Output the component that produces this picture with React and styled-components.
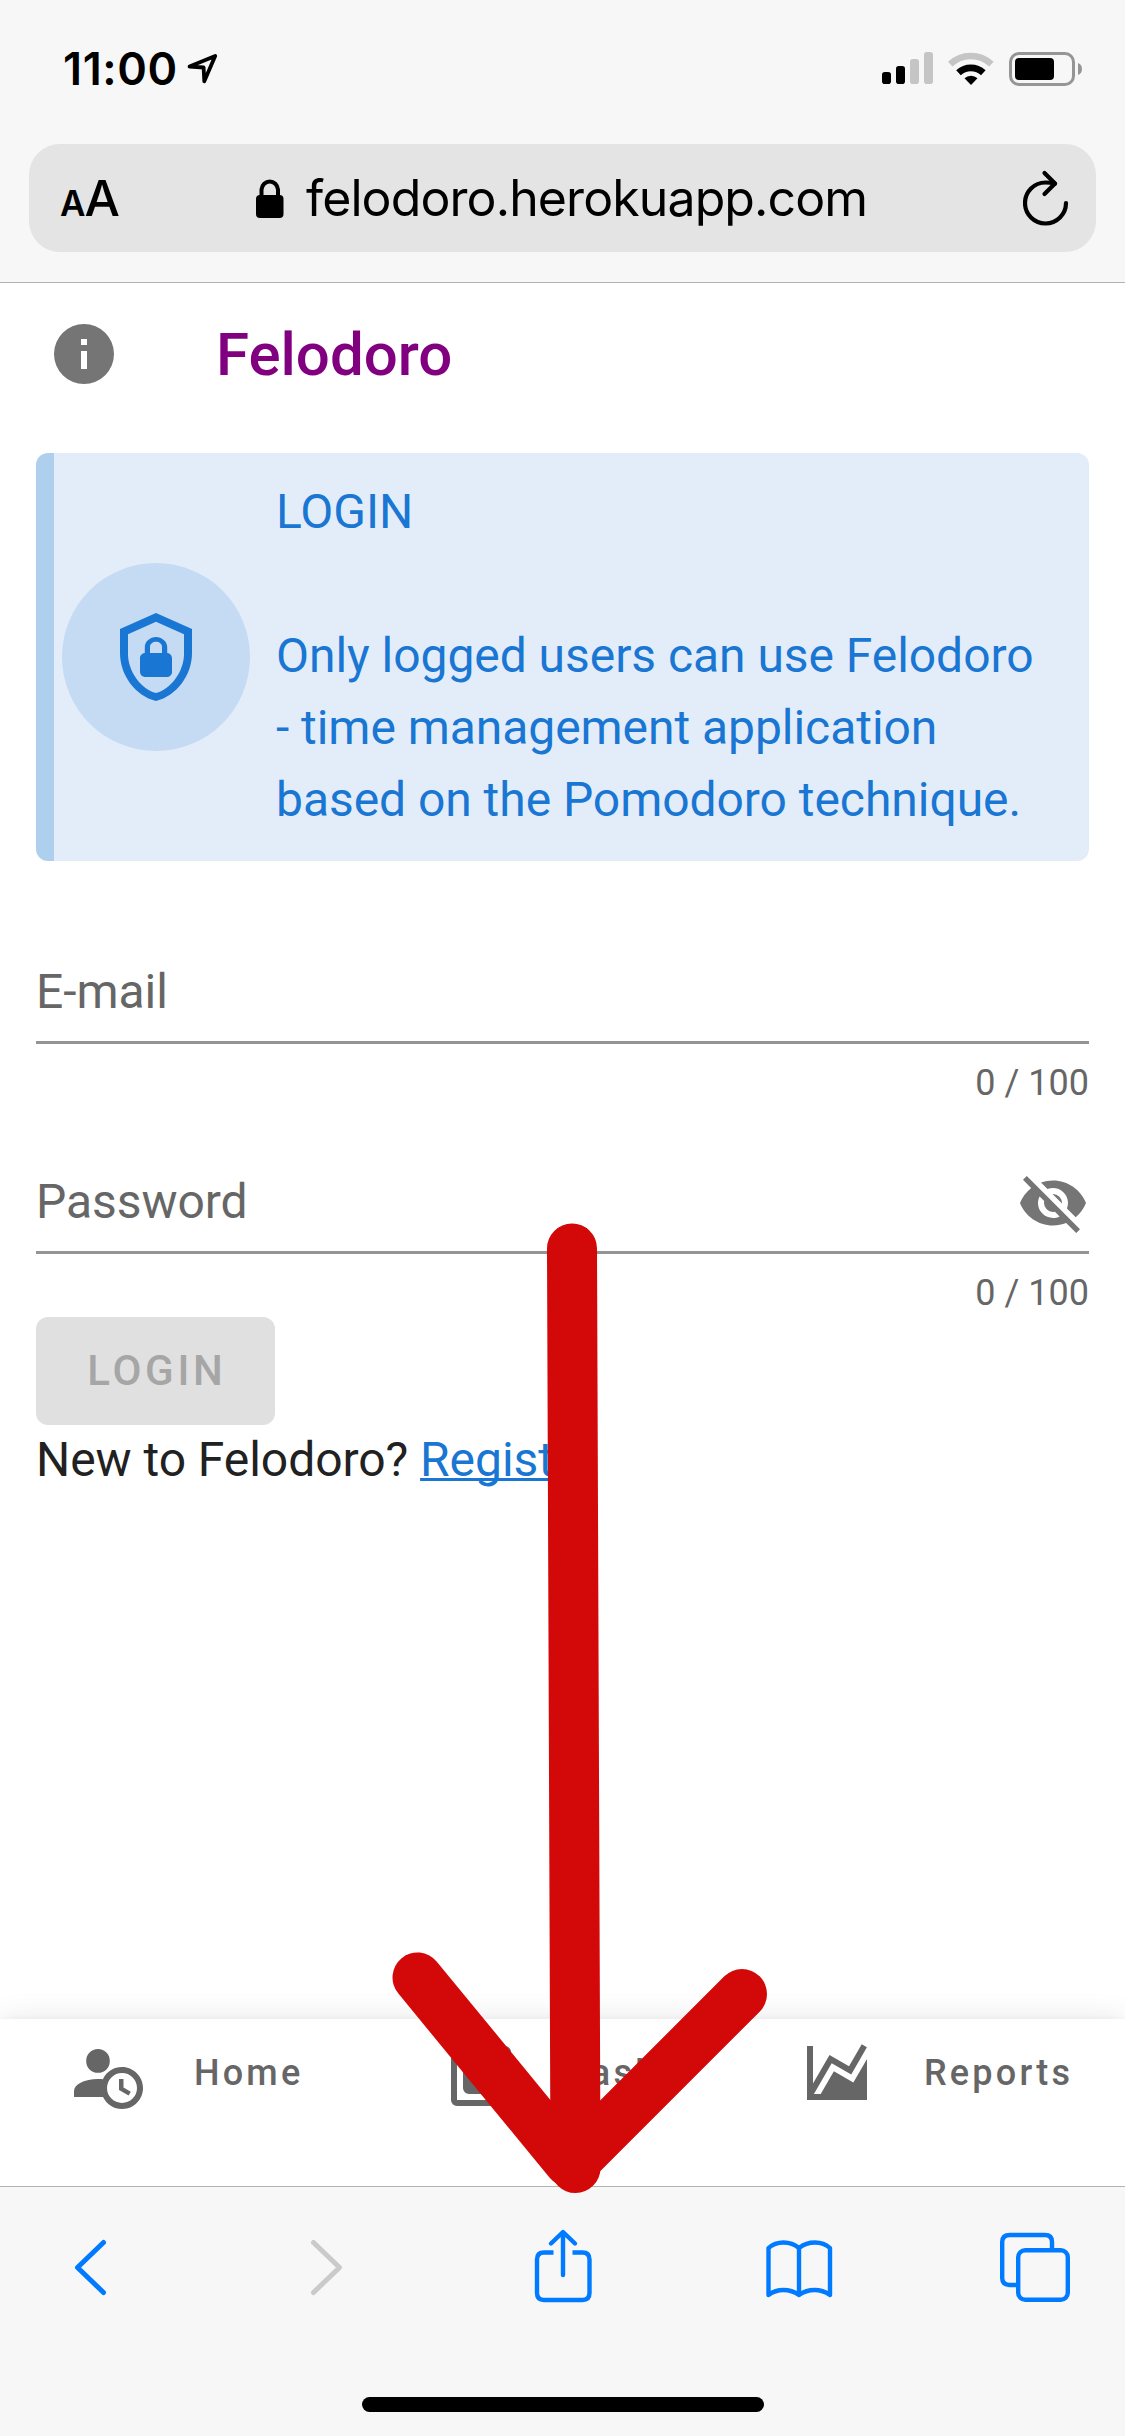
import React from "react";
import styled, { createGlobalStyle } from "styled-components";

const GlobalStyle = createGlobalStyle`
  * { box-sizing: border-box; }
  body { margin: 0; background: #fff; }
`;

const Screen = styled.div`
  position: relative;
  display: flex;
  flex-direction: column;
  width: 1125px;
  height: 2436px;
  overflow: hidden;
  background: #fff;
  font-family: Roboto, "Liberation Sans", sans-serif;
`;

/* Browser chrome, top */
const BrowserTop = styled.header`
  height: 283px;
  flex: none;
  background: #f7f7f7;
  border-bottom: 1px solid #b2b2b2;
  font-family: Inter, "Liberation Sans", sans-serif;
  color: #000;
`;
const StatusBar = styled.div`
  height: 144px;
  padding: 48px 43px 0 63px;
  display: flex;
  align-items: flex-start;
`;
const Clock = styled.span`
  width: 124px;
  font-size: 45px;
  line-height: 42px;
  font-weight: 600;
  letter-spacing: 0.6px;
  white-space: nowrap;
`;
const StatusIcons = styled.div`
  margin-left: auto;
  display: flex;
  gap: 15px;
  padding-top: 4px;
`;
const AddressBar = styled.div`
  margin: 0 29px;
  height: 108px;
  border-radius: 31px;
  background: #e4e4e4;
  display: flex;
  align-items: center;
  padding: 0 27px 0 31px;
`;
const TextSize = styled.div`
  width: 196px;
  padding-top: 4px;
  display: flex;
  align-items: baseline;
  line-height: 60px;
`;
const SizeLetter = styled.span`
  font-size: ${(p) => p.$size}px;
  font-weight: ${(p) => p.$weight};
  letter-spacing: -1px;
`;
const Address = styled.div`
  flex: 1;
  display: flex;
  align-items: center;
  gap: 22px;
`;
const Url = styled.span`
  font-size: 50px;
  line-height: 60px;
  letter-spacing: ${(p) => p.$tracking}px;
  white-space: nowrap;
`;

/* Page */
const Page = styled.main`
  flex: 1;
  display: flex;
  flex-direction: column;
  min-height: 0;
`;
const AppBar = styled.div`
  height: 142px;
  padding-left: 48px;
  display: flex;
  align-items: center;
  gap: 96px;
`;
const AppTitle = styled.h1`
  margin: 0;
  padding-top: 2px;
  font-size: 60px;
  font-weight: 500;
  line-height: 90px;
  letter-spacing: 0;
  color: #800080;
`;
const Content = styled.section`
  flex: 1;
  padding: 28px 36px 0;
`;
const Alert = styled.div`
  height: 408px;
  border-radius: 12px;
  border-left: 18px solid #aecfee;
  background: #e3edfa;
  color: #1976d2;
  display: flex;
  align-items: center;
  padding-left: 8px;
`;
const AlertIcon = styled.div`
  width: 188px;
  height: 188px;
  border-radius: 50%;
  background: #c4dbf3;
  display: flex;
  align-items: center;
  justify-content: center;
`;
const AlertText = styled.div`
  margin-left: 26px;
  padding-bottom: 3px;
  font-size: 48px;
  line-height: 72px;
  white-space: pre-line;
  letter-spacing: -0.05px;
`;
const Fields = styled.div`
  margin-top: 84px;
  display: flex;
  flex-direction: column;
  gap: 54px;
`;
const Field = styled.div``;
const FieldRow = styled.div`
  height: 99px;
  padding-bottom: 3px;
  border-bottom: 3px solid #949494;
  display: flex;
  align-items: center;
  justify-content: space-between;
  font-size: 48px;
  line-height: 60px;
  letter-spacing: -0.05px;
  color: #666;
`;
const Counter = styled.div`
  margin-top: 21px;
  text-align: right;
  font-size: 36px;
  line-height: 36px;
  color: #666;
`;
const LoginButton = styled.button`
  display: block;
  margin: 6px 0 0;
  width: 239px;
  height: 108px;
  border: 0;
  border-radius: 12px;
  background: #e0e0e0;
  color: #a6a6a6;
  font: 500 42px Roboto, sans-serif;
  letter-spacing: 3.75px;
  padding: 0 0 2px 3px;
`;
const Signup = styled.p`
  margin: 0;
  font-size: 48px;
  line-height: 70px;
  letter-spacing: -0.05px;
  color: #212121;
`;
const Link = styled.a`
  color: #1976d2;
  text-decoration: underline;
  text-decoration-thickness: 3px;
  text-decoration-skip-ink: none;
`;

const BottomNav = styled.nav`
  height: 167px;
  flex: none;
  background: #fff;
  box-shadow: 0 6px 12px -3px rgba(0, 0, 0, 0.2), 0 12px 15px rgba(0, 0, 0, 0.14),
    0 3px 30px rgba(0, 0, 0, 0.12);
  display: flex;
  padding: 18px 0 0 71px;
`;
const NavItem = styled.div`
  width: ${(p) => p.$width}px;
  display: flex;
  gap: 51px;
  color: #666;
`;
const NavLabel = styled.span`
  font-size: 36px;
  font-weight: 500;
  line-height: 72px;
  letter-spacing: 3.2px;
`;

/* Browser chrome, bottom */
const BrowserBottom = styled.footer`
  height: 250px;
  flex: none;
  background: #f7f7f7;
  border-top: 1px solid #b2b2b2;
  display: flex;
  flex-direction: column;
  align-items: center;
`;
const Tools = styled.div`
  align-self: stretch;
  height: 210px;
  padding: 39px 54px 0;
  display: flex;
  justify-content: space-between;
`;
const HomeIndicator = styled.div`
  width: 402px;
  height: 15px;
  border-radius: 8px;
  background: #000;
`;
const ArrowOverlay = styled.svg`
  position: absolute;
  left: 392px;
  top: 1223px;
  pointer-events: none;
`;

const MdiSvg = styled.svg`
  display: block;
  flex: none;
  width: ${(p) => p.$size}px;
  height: ${(p) => p.$size}px;
  margin-top: ${(p) => p.$drop || 0}px;
  fill: ${(p) => p.$color || "currentColor"};
`;
const Glyph = styled.svg`
  display: block;
  flex: none;
`;

const Mdi = ({ d, size = 72, color, drop }) => (
  <MdiSvg viewBox="0 0 24 24" $size={size} $color={color} $drop={drop}>
    <path d={d} />
  </MdiSvg>
);

const icons = {
  info: "M13,9H11V7H13M13,17H11V11H13M12,2A10,10 0 0,0 2,12A10,10 0 0,0 12,22A10,10 0 0,0 22,12A10,10 0 0,0 12,2Z",
  shield:
    "M21,11C21,16.55 17.16,21.74 12,23C6.84,21.74 3,16.55 3,11V5L12,1L21,5V11M12,21C15.75,20 19,15.54 19,11.22V6.3L12,3.18L5,6.3V11.22C5,15.54 8.25,20 12,21M14.8,11V9.5C14.8,8.1 13.4,7 12,7C10.6,7 9.2,8.1 9.2,9.5V11C8.6,11 8,11.6 8,12.2V15.7C8,16.4 8.6,17 9.2,17H14.7C15.4,17 16,16.4 16,15.8V12.3C16,11.6 15.4,11 14.8,11M13.5,11H10.5V9.5C10.5,8.7 11.2,8.2 12,8.2C12.8,8.2 13.5,8.7 13.5,9.5V11Z",
  eyeOff:
    "M11.83,9L15,12.16C15,12.11 15,12.05 15,12A3,3 0 0,0 12,9C11.94,9 11.89,9 11.83,9M7.53,9.8L9.08,11.35C9.03,11.56 9,11.77 9,12A3,3 0 0,0 12,15C12.22,15 12.44,14.97 12.65,14.92L14.2,16.47C13.53,16.8 12.79,17 12,17A5,5 0 0,1 7,12C7,11.21 7.2,10.47 7.53,9.8M2,4.27L4.28,6.55L4.73,7C3.08,8.3 1.78,10 1,12C2.73,16.39 7,19.5 12,19.5C13.55,19.5 15.03,19.2 16.38,18.66L16.81,19.08L19.73,22L21,20.73L3.27,3M12,7A5,5 0 0,1 17,12C17,12.64 16.87,13.26 16.64,13.82L19.57,16.75C21.07,15.5 22.27,13.86 23,12C21.27,7.61 17,4.5 12,4.5C10.6,4.5 9.26,4.75 8,5.2L10.17,7.35C10.74,7.13 11.35,7 12,7Z",
  accountClock:
    "M10.63,14.1C12.23,10.58 16.38,9.03 19.9,10.63C23.42,12.23 24.97,16.38 23.37,19.9C22.24,22.4 19.75,24 17,24C14.3,24 11.83,22.44 10.67,20H1V18C1.06,16.86 1.84,15.93 3.34,15.18C4.84,14.43 6.72,14.04 9,14C9.57,14 10.11,14.05 10.63,14.1V14.1M9,4C10.12,4.03 11.06,4.42 11.81,5.17C12.56,5.92 12.93,6.86 12.93,8C12.93,9.14 12.56,10.08 11.81,10.83C11.06,11.58 10.12,11.95 9,11.95C7.88,11.95 6.94,11.58 6.19,10.83C5.44,10.08 5.07,9.14 5.07,8C5.07,6.86 5.44,5.92 6.19,5.17C6.94,4.42 7.88,4.03 9,4M17,22A5,5 0 0,0 22,17A5,5 0 0,0 17,12A5,5 0 0,0 12,17A5,5 0 0,0 17,22M16,14H17.5V16.82L19.94,18.23L19.19,19.53L16,17.69V14Z",
  clipboards:
    "M4,7V21H18V23H4A2,2 0 0,1 2,21V7H4M20,3A2,2 0 0,1 22,5V17A2,2 0 0,1 20,19H8A2,2 0 0,1 6,17V5A2,2 0 0,1 8,3H11.18C11.6,1.84 12.7,1 14,1C15.3,1 16.4,1.84 16.82,3H20M14,3A1,1 0 0,0 13,4A1,1 0 0,0 14,5A1,1 0 0,0 15,4A1,1 0 0,0 14,3Z",
  chart:
    "M17.45,15.18L22,7.31V21H2V3H4V15.54L9.5,6L16,9.78L20.24,2.45L21.97,3.45L16.74,12.5L10.23,8.75L4.31,19H6.57L10.96,11.44L17.45,15.18Z",
};

const navItems = [
  { icon: icons.accountClock, label: "Home", width: 374 },
  { icon: icons.clipboards, label: "Tasks", width: 356 },
  { icon: icons.chart, label: "Reports", width: 324 },
];

const ToolIcon = ({ children, color = "#007aff" }) => (
  <Glyph width="72" height="80" viewBox="0 0 72 80" fill="none" stroke={color} strokeWidth="4.4" strokeLinecap="round" strokeLinejoin="round">
    {children}
  </Glyph>
);

export default function App() {
  return (
    <Screen>
      <GlobalStyle />
      <BrowserTop>
        <StatusBar>
          <Clock>11:00</Clock>
          <Glyph width="32" height="40" viewBox="187 48 32 40" fill="none" stroke="#000" strokeWidth="3.8" strokeLinejoin="round">
            <path d="M189.500 66.500 215.200 55.900 204.300 81.300 203.600 67.500Z" />
          </Glyph>
          <StatusIcons>
            <Glyph width="51" height="33" viewBox="882 53 51 33">
              <rect x="882" y="73" width="9" height="12" rx="2.8" />
              <rect x="896" y="67" width="9" height="18" rx="2.8" />
              <rect x="910" y="60" width="9" height="25" rx="2.8" fill="#c5c5c5" />
              <rect x="924" y="53" width="9" height="32" rx="2.8" fill="#c5c5c5" />
            </Glyph>
            <Glyph width="46" height="34" viewBox="948 52 46 34" fill="none">
              <path d="M950.2 64.2A30 30 0 0 1 991.4 64.2" stroke="#c5c5c5" strokeWidth="6.6" />
              <path d="M958.5 72.8A18.3 18.3 0 0 1 983.3 72.8" stroke="#000" strokeWidth="6.8" />
              <path d="M964.5 78.3A9.5 9.5 0 0 1 977.5 78.3L971 85Z" fill="#000" />
            </Glyph>
            <Glyph width="73" height="34" viewBox="1009 52 73 34">
              <rect x="1010.5" y="53.5" width="63" height="31" rx="8.5" fill="none" stroke="#959595" strokeWidth="3" />
              <rect x="1015" y="58" width="39" height="22" rx="4" />
              <path d="M1078 63C1083.300 64.500 1083.300 73.500 1078 75Z" fill="#959595" />
            </Glyph>
          </StatusIcons>
        </StatusBar>
        <AddressBar>
          <TextSize>
            <SizeLetter $size={35} $weight={600}>A</SizeLetter>
            <SizeLetter $size={50} $weight={500}>A</SizeLetter>
          </TextSize>
          <Address>
            <Glyph width="28" height="40" viewBox="0 0 28 40">
              <rect x="0" y="17" width="27.500" height="23" rx="4" />
              <path d="M5.500 18V11.500A8.300 9 0 0 1 22 11.500V18" fill="none" stroke="#000" strokeWidth="4" />
            </Glyph>
            <Url $tracking={-0.9}>felodoro.herokuapp.com</Url>
          </Address>
          <Glyph width="46" height="56" viewBox="1023 170 46 56" fill="none" stroke="#000" strokeWidth="4.2" strokeLinecap="round" strokeLinejoin="round">
            <path d="M1066 203A20.500 20.500 0 1 1 1045.500 182.500Q1050 182.500 1055 183.600" />
            <path d="M1044.500 173 1055 183.600 1044.500 194" />
          </Glyph>
        </AddressBar>
      </BrowserTop>

      <Page>
        <AppBar>
          <Mdi d={icons.info} color="#757575" />
          <AppTitle>Felodoro</AppTitle>
        </AppBar>
        <Content>
          <Alert>
            <AlertIcon>
              <Mdi d={icons.shield} size={96} />
            </AlertIcon>
            <AlertText>{"LOGIN\n\nOnly logged users can use Felodoro\n- time management application\nbased on the Pomodoro technique."}</AlertText>
          </Alert>
          <Fields>
            <Field>
              <FieldRow>E-mail</FieldRow>
              <Counter>0 / 100</Counter>
            </Field>
            <Field>
              <FieldRow>
                Password
                <Mdi d={icons.eyeOff} color="#757575" drop={3} />
              </FieldRow>
              <Counter>0 / 100</Counter>
            </Field>
          </Fields>
          <LoginButton>LOGIN</LoginButton>
          <Signup>
            New to Felodoro? <Link>Register</Link>
          </Signup>
        </Content>
      </Page>

      <BottomNav>
        {navItems.map((item) => (
          <NavItem key={item.label} $width={item.width}>
            <Mdi d={item.icon} />
            <NavLabel>{item.label}</NavLabel>
          </NavItem>
        ))}
      </BottomNav>

      <BrowserBottom>
        <Tools>
          <ToolIcon>
            <path d="M49.500 16.500 23.500 41.500 49.500 66.500" strokeWidth="5" />
          </ToolIcon>
          <ToolIcon color="#cacaca">
            <path d="M23.500 16.500 49.500 41.500 23.500 66.500" strokeWidth="5" />
          </ToolIcon>
          <ToolIcon>
            <path d="M26.500 26.500H17Q10 26.500 10 33.500V67Q10 74 17 74H55.500Q62.500 74 62.500 67V33.500Q62.500 26.500 55.500 26.500H45.500" strokeLinecap="butt" />
            <path d="M36 7V49M24 17.500 36 6 48 17.500" />
          </ToolIcon>
          <ToolIcon>
            <path d="M36 22Q29.500 16.500 20.500 16.500T5.500 22V69Q12 64 20.500 64T36 69Q43 64 51.500 64T67 69V22Q61 16.500 52 16.500T36 22V69" />
          </ToolIcon>
          <ToolIcon>
            <path d="M17 59H11Q3.200 59 3.200 52V16Q3.200 9 11 9H46Q53 9 53 16V24" strokeLinecap="butt" />
            <rect x="19.200" y="24.200" width="49.600" height="49.600" rx="7" />
          </ToolIcon>
        </Tools>
        <HomeIndicator />
      </BrowserBottom>

      <ArrowOverlay width="376" height="972" viewBox="392 1223 376 972" fill="none" stroke="#d30808" strokeWidth="50" strokeLinecap="round" strokeLinejoin="round">
        <path d="M572 1248.500 575.500 2168" />
        <path d="M417.500 1977.500 569 2162" />
        <path d="M742 1994 578 2158" />
      </ArrowOverlay>
    </Screen>
  );
}
